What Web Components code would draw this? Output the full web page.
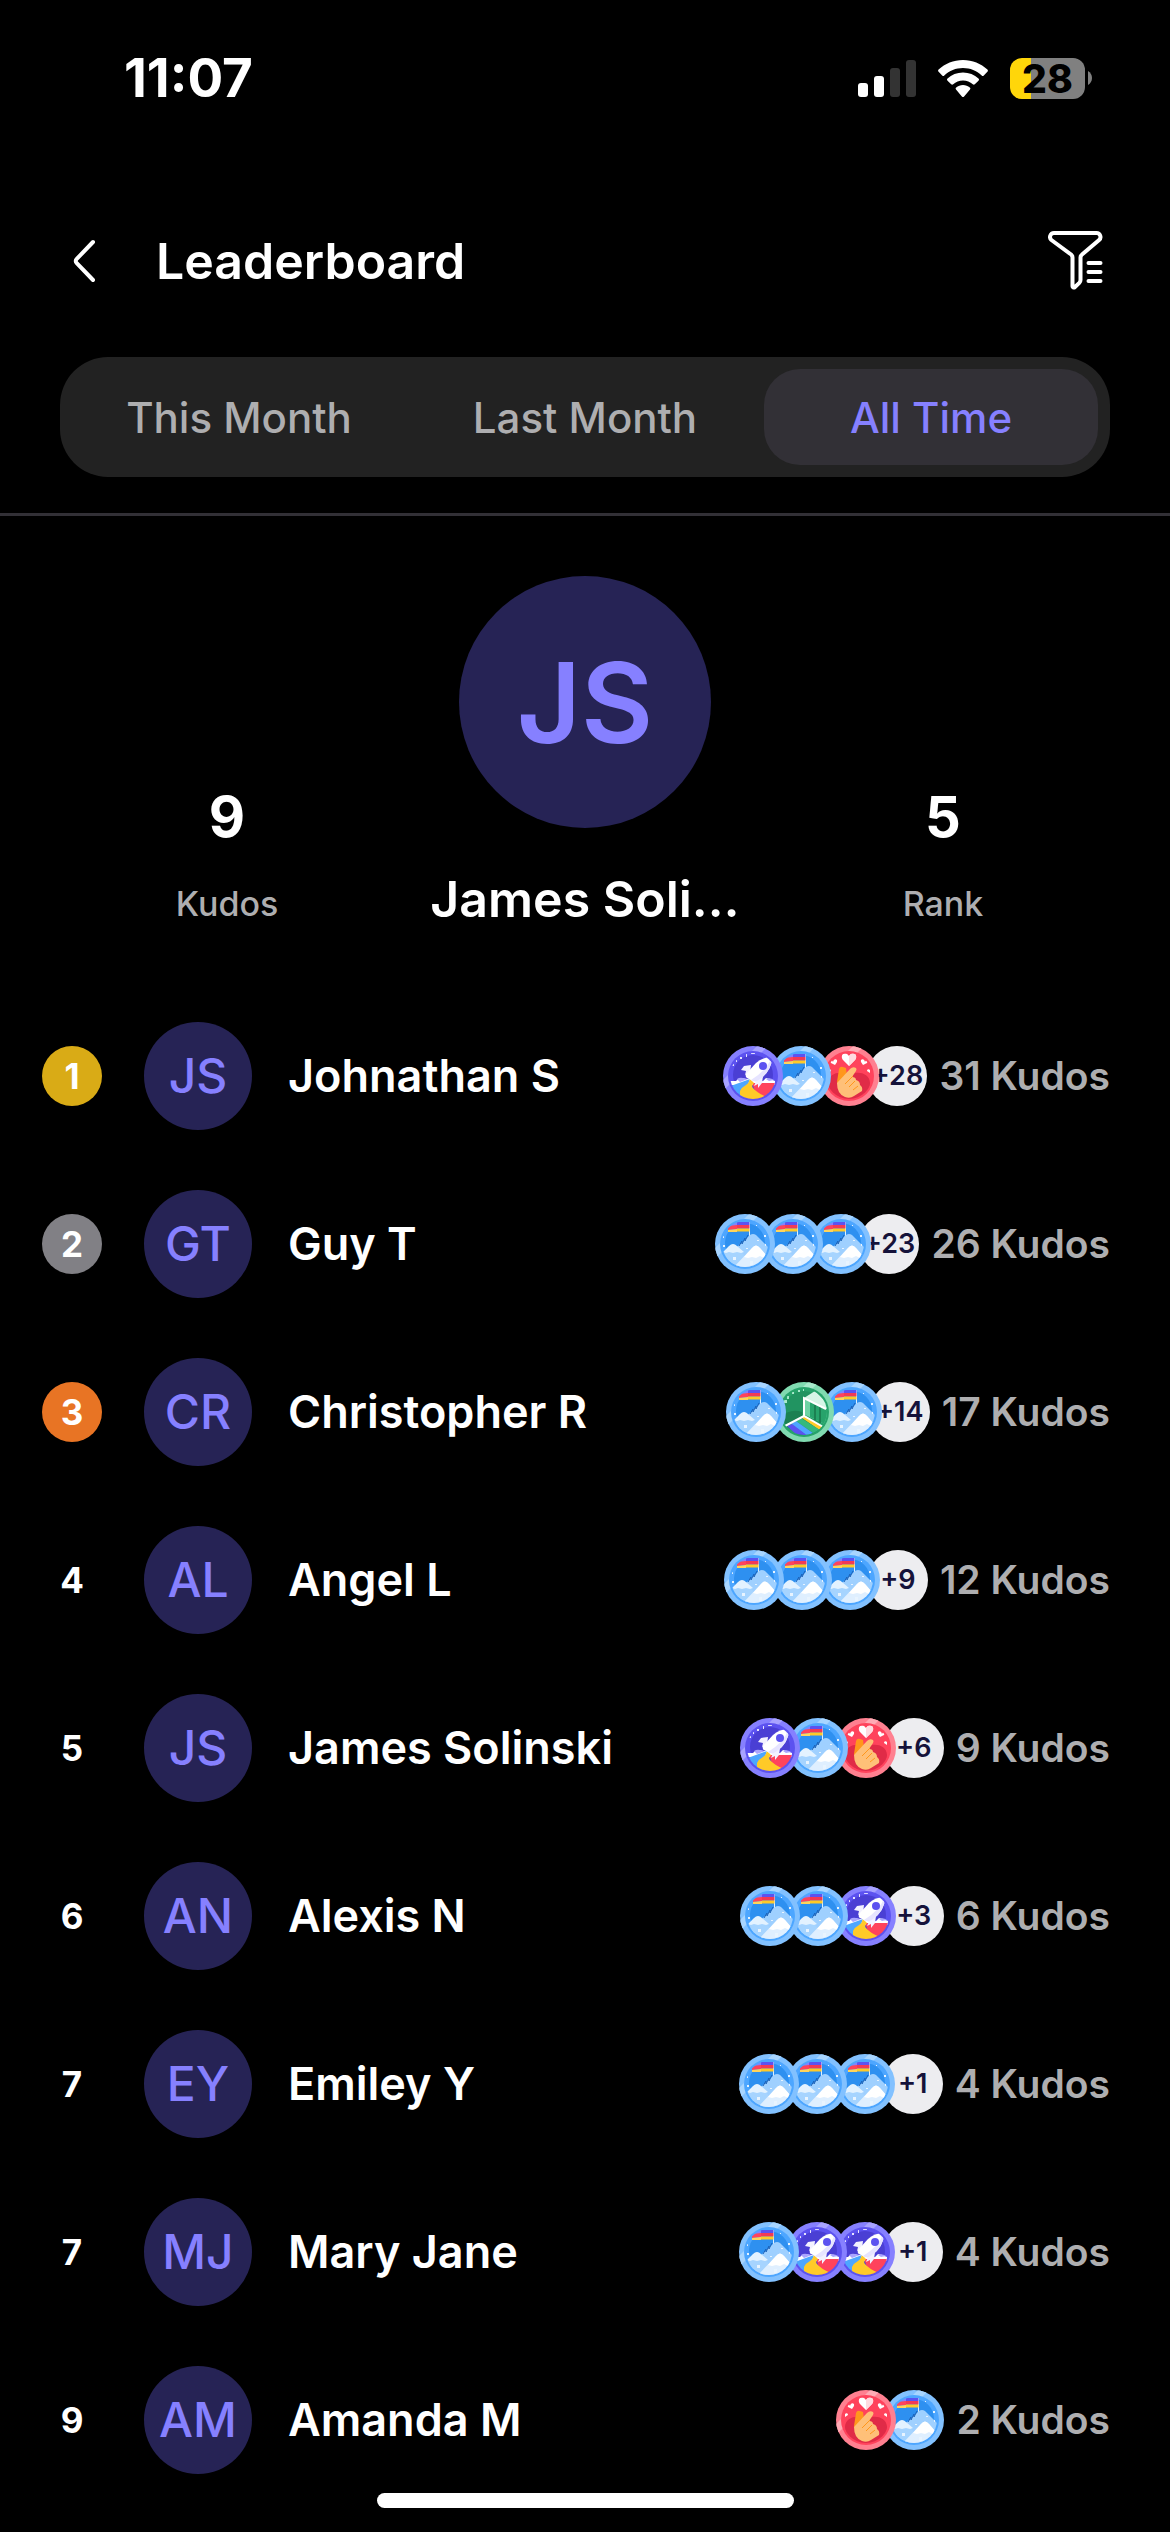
<!DOCTYPE html>
<html lang="en">
<head>
<meta charset="utf-8">
<meta name="viewport" content="width=device-width, initial-scale=1">
<title>Leaderboard</title>
<style>
  body {
    margin: 0;
    background: #000;
    color: #fff;
    font-family: Inter, "Liberation Sans", sans-serif;
    --accent: #8680ff;
    --accent-dark: #262355;
    --muted: #aeaeb0;
    --line: #323036;
  }
</style>
</head>
<body>
<leaderboard-app></leaderboard-app>

<script>
class StatusBar extends HTMLElement {
  constructor() {
    super();
    this.attachShadow({ mode: "open" });
    this.shadowRoot.innerHTML = `
      <style>
        :host {
          display: flex;
          justify-content: space-between;
          align-items: center;
          height: 156px;
          padding: 0 78px 0 124px;
        }
        time {
          font-size: 53px;
          line-height: 60px;
          font-weight: 700;
        }
        .icons {
          display: flex;
          align-items: center;
          gap: 22px;
        }
        svg {
          display: block;
        }
        .power {
          display: flex;
          align-items: center;
          gap: 3px;
        }
        .battery {
          width: 75px;
          height: 41px;
          border-radius: 12px;
          background: linear-gradient(to right, #ffd60a 28%, #808080 28%);
          color: #000;
          font-size: 39px;
          line-height: 41px;
          font-weight: 800;
          text-align: center;
        }
      </style>
      <time>11:07</time>
      <div class="icons">
        <svg width="58" height="37" viewBox="0 0 58 37" fill="#fff">
          <rect x="0" y="23" width="10" height="14" rx="3"/>
          <rect x="16" y="16" width="10" height="21" rx="3"/>
          <rect x="32" y="8" width="10" height="29" rx="3" fill="#333"/>
          <rect x="48" y="0" width="10" height="37" rx="3" fill="#333"/>
        </svg>
        <svg width="50" height="37" viewBox="0 0 50 37" fill="#fff">
          <path d="M25 0C15.500 0 7 3.500.6 9.600a1.500 1.500 0 0 0 0 2.100l3.600 3.700a1.500 1.500 0 0 0 2.100 0C11.300 10.700 17.800 8 25 8s13.700 2.700 18.700 7.400a1.500 1.500 0 0 0 2.100 0l3.600-3.700a1.500 1.500 0 0 0 0-2.100C43 3.500 34.500 0 25 0z"/>
          <path d="M25 12.500c-6 0-11.400 2.200-15.500 6a1.500 1.500 0 0 0 0 2.200l3.700 3.600a1.500 1.500 0 0 0 2 0c2.600-2.400 6-3.800 9.800-3.800s7.200 1.400 9.800 3.800a1.500 1.500 0 0 0 2 0l3.700-3.600a1.500 1.500 0 0 0 0-2.200c-4.100-3.800-9.500-6-15.500-6z"/>
          <path d="M25 25c-2.600 0-5 .9-6.800 2.500a1.500 1.500 0 0 0 0 2.200l5.700 6.700a1.500 1.500 0 0 0 2.200 0l5.700-6.700a1.500 1.500 0 0 0 0-2.200C30 25.900 27.600 25 25 25z"/>
        </svg>
        <div class="power">
          <div class="battery">28</div>
          <svg width="4" height="14" viewBox="0 0 4 14" fill="#808080"><path d="M0 0C2.500 1.500 4 4 4 7s-1.500 5.500-4 7z"/></svg>
        </div>
      </div>
    `;
  }
}

class PageHeader extends HTMLElement {
  constructor() {
    super();
    this.attachShadow({ mode: "open" });
    this.shadowRoot.innerHTML = `
      <style>
        :host {
          display: flex;
          align-items: center;
          padding: 45px 58px 36px 48px;
        }
        button {
          display: flex;
          align-items: center;
          justify-content: center;
          width: 72px;
          height: 120px;
          padding: 0;
          border: none;
          background: none;
          color: inherit;
          cursor: pointer;
        }
        h1 {
          flex: 1;
          margin: 0 0 0 36px;
          font-size: 50px;
          line-height: 60px;
          font-weight: 600;
        }
        svg {
          fill: none;
          stroke: currentColor;
          stroke-width: 4;
          stroke-linecap: round;
          stroke-linejoin: round;
        }
      </style>
      <button aria-label="Back">
        <svg width="24" height="44" viewBox="0 0 24 44"><path d="M21 3L4.500 20.200a2.500 2.500 0 0 0 0 3.600L21 41"/></svg>
      </button>
      <h1><slot></slot></h1>
      <button aria-label="Filter">
        <svg width="56" height="62" viewBox="0 0 56 62">
          <path d="M6 3h42.500a4 4 0 0 1 2.600 7L34 24.500a4 4 0 0 0-1.500 3V50a4 4 0 0 1-1.200 2.900l-4.600 4.300a1.300 1.300 0 0 1-2.200-1V27.500a4 4 0 0 0-1.400-3L3.400 10a4 4 0 0 1 2.600-7z"/>
          <path d="M40.500 33h12M40.500 42h12M40.500 51h12"/>
        </svg>
      </button>
    `;
  }
}

class PeriodTabs extends HTMLElement {
  constructor() {
    super();
    this.attachShadow({ mode: "open" });
    this._tabs = ["This Month", "Last Month", "All Time"];
    this._active = 2;
  }

  connectedCallback() {
    this._render();
    this.shadowRoot.addEventListener("click", (e) => {
      const btn = e.target.closest("button");
      if (!btn) return;
      this._active = Number(btn.dataset.index);
      this._render();
    });
  }

  _render() {
    let html = "";
    for (let i = 0; i < this._tabs.length; i++) {
      html += `<button role="tab" data-index="${i}" aria-selected="${i === this._active}">${this._tabs[i]}</button>`;
    }

    this.shadowRoot.innerHTML = `
      <style>
        :host {
          display: block;
          padding: 0 60px 36px;
          border-bottom: 3px solid var(--line);
        }
        .tabs {
          display: grid;
          grid-template-columns: repeat(3, 1fr);
          gap: 12px;
          padding: 12px;
          border-radius: 48px;
          background: #222;
        }
        button {
          height: 96px;
          padding: 0;
          border: none;
          border-radius: 36px;
          background: none;
          color: var(--muted);
          font-family: inherit;
          font-size: 42px;
          font-weight: 500;
          cursor: pointer;
        }
        button[aria-selected="true"] {
          background: var(--line);
          color: var(--accent);
        }
      </style>
      <div class="tabs" role="tablist">${html}</div>
    `;
  }
}

class UserAvatar extends HTMLElement {
  constructor() {
    super();
    this.attachShadow({ mode: "open" });
    this.shadowRoot.innerHTML = `
      <style>
        :host {
          display: flex;
          align-items: center;
          justify-content: center;
          flex: none;
          width: 108px;
          height: 108px;
          border-radius: 50%;
          background: var(--accent-dark);
          color: var(--accent);
          font-size: 48px;
          line-height: 1;
          font-weight: 500;
        }
        :host([size="large"]) {
          width: 252px;
          height: 252px;
          font-size: 111px;
          font-weight: 600;
        }
      </style>
      <slot></slot>
    `;
  }
}

class ProfileSummary extends HTMLElement {
  constructor() {
    super();
    this.attachShadow({ mode: "open" });
  }

  // long names are cut to ten characters under the avatar
  _shortName() {
    const name = this.getAttribute("name");
    return name.length > 10 ? name.slice(0, 10) + "…" : name;
  }

  connectedCallback() {
    this.shadowRoot.innerHTML = `
      <style>
        :host {
          display: grid;
          grid-template-columns: repeat(3, 1fr);
          align-items: end;
          padding: 60px 48px 63px;
          text-align: center;
        }
        .stat {
          display: flex;
          flex-direction: column;
          gap: 26px;
        }
        .value {
          font-size: 56px;
          line-height: 72px;
          font-weight: 700;
        }
        .label {
          color: var(--muted);
          font-size: 34px;
          line-height: 50px;
          font-weight: 500;
        }
        .person {
          display: flex;
          flex-direction: column;
          align-items: center;
          gap: 41px;
        }
        h2 {
          margin: 0;
          white-space: nowrap;
          font-size: 50px;
          line-height: 60px;
          font-weight: 600;
        }
      </style>
      <div class="stat">
        <span class="value">${this.getAttribute("kudos")}</span>
        <span class="label">Kudos</span>
      </div>
      <div class="person">
        <user-avatar size="large">${this.getAttribute("initials")}</user-avatar>
        <h2>${this._shortName()}</h2>
      </div>
      <div class="stat">
        <span class="value">${this.getAttribute("rank")}</span>
        <span class="label">Rank</span>
      </div>
    `;
  }
}

// ring, face and shade colours plus the drawing, on a 60x60 grid
const BADGES = {
  summit: {
    ring: "#82c1ff", shine: "#a8d5ff", face: "#4da6ff", shade: "#2e90f0",
    art: `
      <path d="M34.500 8v15" stroke="#dff0ff"/>
      <path d="M13 9l9-1v3l-9 1z" fill="#8680ff"/>
      <path d="M13 12l9-1v4l-9 1z" fill="#ff435c"/>
      <path d="M13 16l9-1v3H13z" fill="#ffd45c"/>
      <path d="M22 8h12.500v3H22z" fill="#5c52f0"/>
      <path d="M22 11h12.500v3.500H22z" fill="#f23a55"/>
      <path d="M22 14.500h12.500v3H22z" fill="#ffca28"/>
      <path d="M12 55V42l23-21q3-2 6 0l16 16v18z" fill="#9fd0ff"/>
      <path d="M24 32l3-5v3l3-6v3l3-6" fill="none" stroke="#1b62b8"/>
      <path d="M5 56V42l9-9q4-5 8 0l7 8 3 15z" fill="#a6d4ff"/>
      <path d="M8 38l6-6q4-4 8 0l7 6-3 1-4-1-4 1-4-1-3 1z" fill="#e3f2ff"/>
      <path d="M18 54l19-20q4-5 8 0l10 12v10z" fill="#dfefff"/>
      <path d="M29 43l8-9q4-5 8 0l7 8-3 2-4-2-4 2-4-1-4 1z" fill="#fff"/>
      <path d="M18 43h3v3h-3zM35 47h3v4h-3zM49 21h2v2h-2zM8 31h2v2H8zM42 26h2v1h-2zM31 34h2v1h-2zM41 11h1v1h-1zM50 30h1v2h-1zM8 22h1v2H8z" fill="#e8f4ff"/>`
  },
  rocket: {
    ring: "#8680ff", shine: "#a8a3ff", face: "#5c52f0", shade: "#4a3fd4",
    art: `
      <path d="M5 35h8l2-2 4-1 4 1h4l8 3 5-1 3-3 4 1 5 2v4H5z" fill="#fff"/>
      <path d="M14 33q3-2 6-1l5 1-8 3zM43 33q4-2 8 1l-5 1z" fill="#aaa5ff"/>
      <path d="M5 41l22-8-8 22H8z" fill="#4da6ff"/>
      <path d="M29 37h27l-5 19H36z" fill="#ff435c"/>
      <path d="M27 33l4 4q-3 3-1 5 4 5 14 9l-6 6H17V45q2-4 6-6 3-2 4-6z" fill="#ffca28"/>
      <path d="M28 19l-7 1-3 4 5 1-1 4 5-2zM40 30l-1 7-4 5v-4l-4 2 3-7z" fill="#f2f1ff"/>
      <path d="M49 11q-10 0-16 6l-10 11q-1 3 1 4l6 3q3 1 6-1 13-9 13-23z" fill="#fff"/>
      <path d="M49 11q0 14-13 23-3 2-6 1l-2-1q15-9 21-23z" fill="#e6e4ff"/>
      <circle cx="40" cy="20" r="4" fill="#5c52f0"/>
      <path d="M9 18h2v2H9zM13 14h1v2h-1zM17 11h2v2h-2zM23 8h1v3h-1zM28 7h4v1h-4z" fill="#e6e4ff"/>`
  },
  love: {
    ring: "#ff8090", shine: "#ffabb5", face: "#ff435c", shade: "#ff435c",
    art: `
      <path d="M30 31c-3-7-21-6-21 6 0 10 10 17 21 17s21-7 21-17c0-12-18-13-21-6z" fill="#e02b47"/>
      <path d="M30 20l-6-6c-4-6 3-9 6-4 3-5 10-2 6 4z" fill="#fff"/>
      <path d="M30 20V10c3-5 10-2 6 4z" fill="#ffdbe0"/>
      <path d="M16 19l-4-2c-2-3 1-4 2-1 1-4 5-3 4 0zM44 19l4-2c2-3-1-4-2-1-1-4-5-3-4 0zM51 27l-3-2c0-2 2-2 3-1zM9 27l3-2c0-2-2-2-3-1z" fill="#fff"/>
      <path d="M18 36l2-13q1-3 4-2l3 1 1 8-8 11z" fill="#ff971c"/>
      <path d="M18 37l13-14q3-3 6-1 1 1 0 3l-4 6q4 0 4 3 4 1 4 5 3 2 2 6l-8 5q-4 3-9 1-8-3-8-14z" fill="#ffc078"/>
      <path d="M26 38l8-8M30 41l6-6M34 44l5-4" stroke="#ff971c" fill="none"/>`
  },
  door: {
    ring: "#80dab0", shine: "#a8e9cb", face: "#27a36b", shade: "#219461",
    art: `
      <path d="M8 35q8-9 20-5v8L12 44z" fill="#1b8052"/>
      <path d="M30 16l11-7 12 12v6L34 18z" fill="#d6f5e6"/>
      <path d="M31 17l22 11v15l-22-10z" fill="#6dd3a4"/>
      <path d="M36 20l17 8v15l-17-8z" fill="#27a36b"/>
      <path d="M41 23v15M46 25v16" stroke="#1b8052" stroke-width="2"/>
      <path d="M30 34L12 44l17 12 21-9z" fill="#1b8052"/>
      <path d="M28 36l3-2 18 11-2 4z" fill="#ffca28"/>
      <path d="M22 39l5-3 19 12-4 5z" fill="#34b97c"/>
      <path d="M17 42l5-3 17 12-6 3z" fill="#4da6ff"/>
      <path d="M13 44l5-2 16 12-9 1z" fill="#5c52f0"/>
      <path d="M11 44l19-10 21 12M30 34V16l22 11" fill="none" stroke="#fff" stroke-width="2"/>
      <path d="M10 18h3v3h-3zM13 14h2v3h-2zM18 10h2v2h-2zM24 8h2v2h-2zM29 7h1v2h-1z" fill="#a8e9cb"/>`
  }
};

class KudosBadge extends HTMLElement {
  constructor() {
    super();
    this.attachShadow({ mode: "open" });
  }

  connectedCallback() {
    const b = BADGES[this.getAttribute("type")];
    this.shadowRoot.innerHTML = `
      <style>
        :host {
          display: block;
          width: 60px;
          height: 60px;
        }
        svg {
          display: block;
        }
      </style>
      <svg width="60" height="60" viewBox="0 0 60 60">
        <clipPath id="disc"><circle cx="30" cy="30" r="30"/></clipPath>
        <clipPath id="face"><circle cx="30" cy="30" r="23"/></clipPath>
        <circle cx="30" cy="30" r="30" fill="${b.ring}"/>
        <path d="M36-2h11L-2 47V36z" fill="${b.shine}" clip-path="url(#disc)"/>
        <circle cx="30" cy="30" r="25" fill="${b.face}"/>
        <circle cx="30" cy="29" r="20" fill="${b.shade}"/>
        <g clip-path="url(#face)">${b.art}</g>
      </svg>
    `;
  }
}

class KudosStack extends HTMLElement {
  constructor() {
    super();
    this.attachShadow({ mode: "open" });
  }

  connectedCallback() {
    const types = this.getAttribute("types").split(" ");
    const more = this.getAttribute("more");
    let html = "";
    for (let i = 0; i < types.length; i++) {
      html += `<kudos-badge type="${types[i]}" style="z-index: ${types.length - i}"></kudos-badge>`;
    }
    if (more) {
      html += `<span class="more">+${more}</span>`;
    }

    this.shadowRoot.innerHTML = `
      <style>
        :host {
          display: flex;
          flex: none;
          isolation: isolate;
        }
        kudos-badge {
          position: relative;
        }
        kudos-badge + kudos-badge,
        .more {
          margin-left: -12px;
        }
        .more {
          width: 60px;
          height: 60px;
          border-radius: 50%;
          background: #ededf0;
          color: #15123a;
          font-size: 27px;
          line-height: 60px;
          font-weight: 600;
          text-align: center;
        }
      </style>
      ${html}
    `;
  }
}

class LeaderRow extends HTMLElement {
  constructor() {
    super();
    this.attachShadow({ mode: "open" });
  }

  connectedCallback() {
    this.shadowRoot.innerHTML = `
      <style>
        :host {
          display: flex;
          align-items: center;
          height: 168px;
          padding: 0 60px 0 42px;
        }
        .rank {
          flex: none;
          width: 60px;
          height: 60px;
          margin-right: 42px;
          border-radius: 50%;
          font-size: 35px;
          line-height: 60px;
          font-weight: 700;
          text-align: center;
        }
        :host([rank="1"]) .rank {
          background: #d9ab16;
        }
        :host([rank="2"]) .rank {
          background: #818085;
        }
        :host([rank="3"]) .rank {
          background: #e87424;
        }
        .name {
          flex: 1;
          margin-left: 36px;
          font-size: 45px;
          line-height: 60px;
          font-weight: 600;
        }
        .total {
          margin-left: 12px;
          color: var(--muted);
          font-size: 39px;
          line-height: 60px;
          font-weight: 600;
        }
      </style>
      <span class="rank">${this.getAttribute("rank")}</span>
      <user-avatar>${this.getAttribute("initials")}</user-avatar>
      <span class="name"><slot></slot></span>
      <kudos-stack types="${this.getAttribute("badges")}" more="${this.getAttribute("more")}"></kudos-stack>
      <span class="total">${this.getAttribute("total")} Kudos</span>
    `;
  }
}

class LeaderboardApp extends HTMLElement {
  constructor() {
    super();
    this.attachShadow({ mode: "open" });
    this._people = [
      { rank: 1, initials: "JS", name: "Johnathan S", badges: "rocket summit love", more: "28", total: 31 },
      { rank: 2, initials: "GT", name: "Guy T", badges: "summit summit summit", more: "23", total: 26 },
      { rank: 3, initials: "CR", name: "Christopher R", badges: "summit door summit", more: "14", total: 17 },
      { rank: 4, initials: "AL", name: "Angel L", badges: "summit summit summit", more: "9", total: 12 },
      { rank: 5, initials: "JS", name: "James Solinski", badges: "rocket summit love", more: "6", total: 9 },
      { rank: 6, initials: "AN", name: "Alexis N", badges: "summit summit rocket", more: "3", total: 6 },
      { rank: 7, initials: "EY", name: "Emiley Y", badges: "summit summit summit", more: "1", total: 4 },
      { rank: 7, initials: "MJ", name: "Mary Jane", badges: "summit rocket rocket", more: "1", total: 4 },
      { rank: 9, initials: "AM", name: "Amanda M", badges: "love summit", more: "", total: 2 }
    ];
  }

  connectedCallback() {
    let rows = "";
    for (const p of this._people) {
      rows += `
        <li><leader-row rank="${p.rank}" initials="${p.initials}" badges="${p.badges}" more="${p.more}" total="${p.total}">${p.name}</leader-row></li>
      `;
    }

    this.shadowRoot.innerHTML = `
      <style>
        :host {
          display: block;
        }
        ol {
          margin: 0;
          padding: 0;
          list-style: none;
        }
        .home {
          position: fixed;
          bottom: 24px;
          left: 50%;
          width: 417px;
          height: 15px;
          margin-left: -208px;
          border-radius: 8px;
          background: #fff;
        }
      </style>
      <status-bar></status-bar>
      <page-header>Leaderboard</page-header>
      <period-tabs></period-tabs>
      <main>
        <profile-summary name="James Solinski" initials="JS" kudos="9" rank="5"></profile-summary>
        <ol>${rows}</ol>
      </main>
      <div class="home"></div>
    `;
  }
}

customElements.define("status-bar", StatusBar);
customElements.define("page-header", PageHeader);
customElements.define("period-tabs", PeriodTabs);
customElements.define("user-avatar", UserAvatar);
customElements.define("profile-summary", ProfileSummary);
customElements.define("kudos-badge", KudosBadge);
customElements.define("kudos-stack", KudosStack);
customElements.define("leader-row", LeaderRow);
customElements.define("leaderboard-app", LeaderboardApp);
</script>
</body>
</html>
